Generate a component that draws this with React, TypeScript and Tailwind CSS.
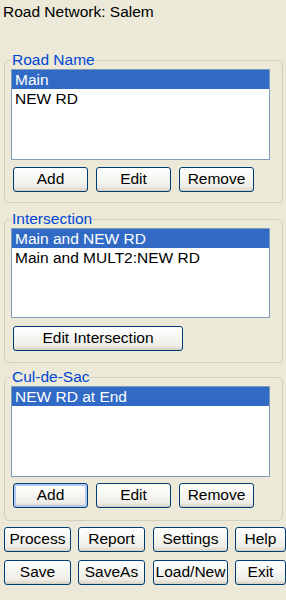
import React from "react";

function Btn({
  label,
  className = "",
  focused = false,
}: {
  label: string;
  className?: string;
  focused?: boolean;
}) {
  return (
    <button
      className={
        "h-[25px] shrink-0 rounded-[3px] border border-[#003c74] bg-[linear-gradient(180deg,#ffffff_0%,#f6f6f2_45%,#eeede7_80%,#d8d3c6_100%)] pb-[2px] text-center leading-[21px] text-black " +
        (focused ? "shadow-[inset_0_0_0_2px_#b2c8f3] " : "shadow-[inset_0_-1px_0_#d6d0c5] ") +
        className
      }
    >
      {label}
    </button>
  );
}

function ListBox({
  items,
  selected,
  height,
}: {
  items: string[];
  selected: number;
  height: string;
}) {
  return (
    <div className={"w-[259px] overflow-hidden border border-[#7f9db9] bg-white " + height}>
      {items.map((it, i) => (
        <div
          key={it}
          className={
            "h-[19px] whitespace-nowrap pl-[3px] leading-[19px] " +
            (i === selected ? "bg-[#316ac5] text-white" : "text-black")
          }
        >
          {it}
        </div>
      ))}
    </div>
  );
}

function Group({
  title,
  className,
  children,
}: {
  title: string;
  className: string;
  children: React.ReactNode;
}) {
  return (
    <fieldset
      className={
        "ml-[4px] w-[279px] rounded-[5px] border border-[#d0d0bf] pl-[6px] " + className
      }
    >
      <legend className="px-[1px] leading-[18px] text-[#0046d5]">{title}</legend>
      {children}
    </fieldset>
  );
}

export default function App() {
  return (
    <div className="h-[600px] w-[286px] overflow-hidden bg-[#ece9d8] font-['Liberation_Sans',Arial,sans-serif] text-[15.5px] text-black">
      <div className="pl-[3px] pt-[3px] leading-[18px]">Road Network: Salem</div>

      <Group title="Road Name" className="mt-[30px] pb-[10px]">
        <ListBox items={["Main", "NEW RD"]} selected={0} height="h-[91px]" />
        <div className="ml-[2px] mt-[7px] flex gap-[8px]">
          <Btn label="Add" className="w-[75px]" />
          <Btn label="Edit" className="w-[75px]" />
          <Btn label="Remove" className="w-[75px]" />
        </div>
      </Group>

      <Group title="Intersection" className="mt-[7px] pb-[11px]">
        <ListBox
          items={["Main and NEW RD", "Main and MULT2:NEW RD"]}
          selected={0}
          height="h-[90px]"
        />
        <div className="ml-[2px] mt-[8px] flex">
          <Btn label="Edit Intersection" className="w-[170px]" />
        </div>
      </Group>

      <Group title="Cul-de-Sac" className="mt-[5px] pb-[12px]">
        <ListBox items={["NEW RD at End"]} selected={0} height="h-[91px]" />
        <div className="ml-[2px] mt-[6px] flex gap-[8px]">
          <Btn label="Add" className="w-[75px]" focused />
          <Btn label="Edit" className="w-[75px]" />
          <Btn label="Remove" className="w-[75px]" />
        </div>
      </Group>

      <div className="ml-[4px] mt-[6px] flex">
        <Btn label="Process" className="w-[67px]" />
        <Btn label="Report" className="ml-[7px] w-[67px]" />
        <Btn label="Settings" className="ml-[8px] w-[75px]" />
        <Btn label="Help" className="ml-[7px] w-[51px]" />
      </div>
      <div className="ml-[4px] mt-[8px] flex">
        <Btn label="Save" className="w-[67px]" />
        <Btn label="SaveAs" className="ml-[7px] w-[67px]" />
        <Btn label="Load/New" className="ml-[8px] w-[75px]" />
        <Btn label="Exit" className="ml-[7px] w-[51px]" />
      </div>
    </div>
  );
}
